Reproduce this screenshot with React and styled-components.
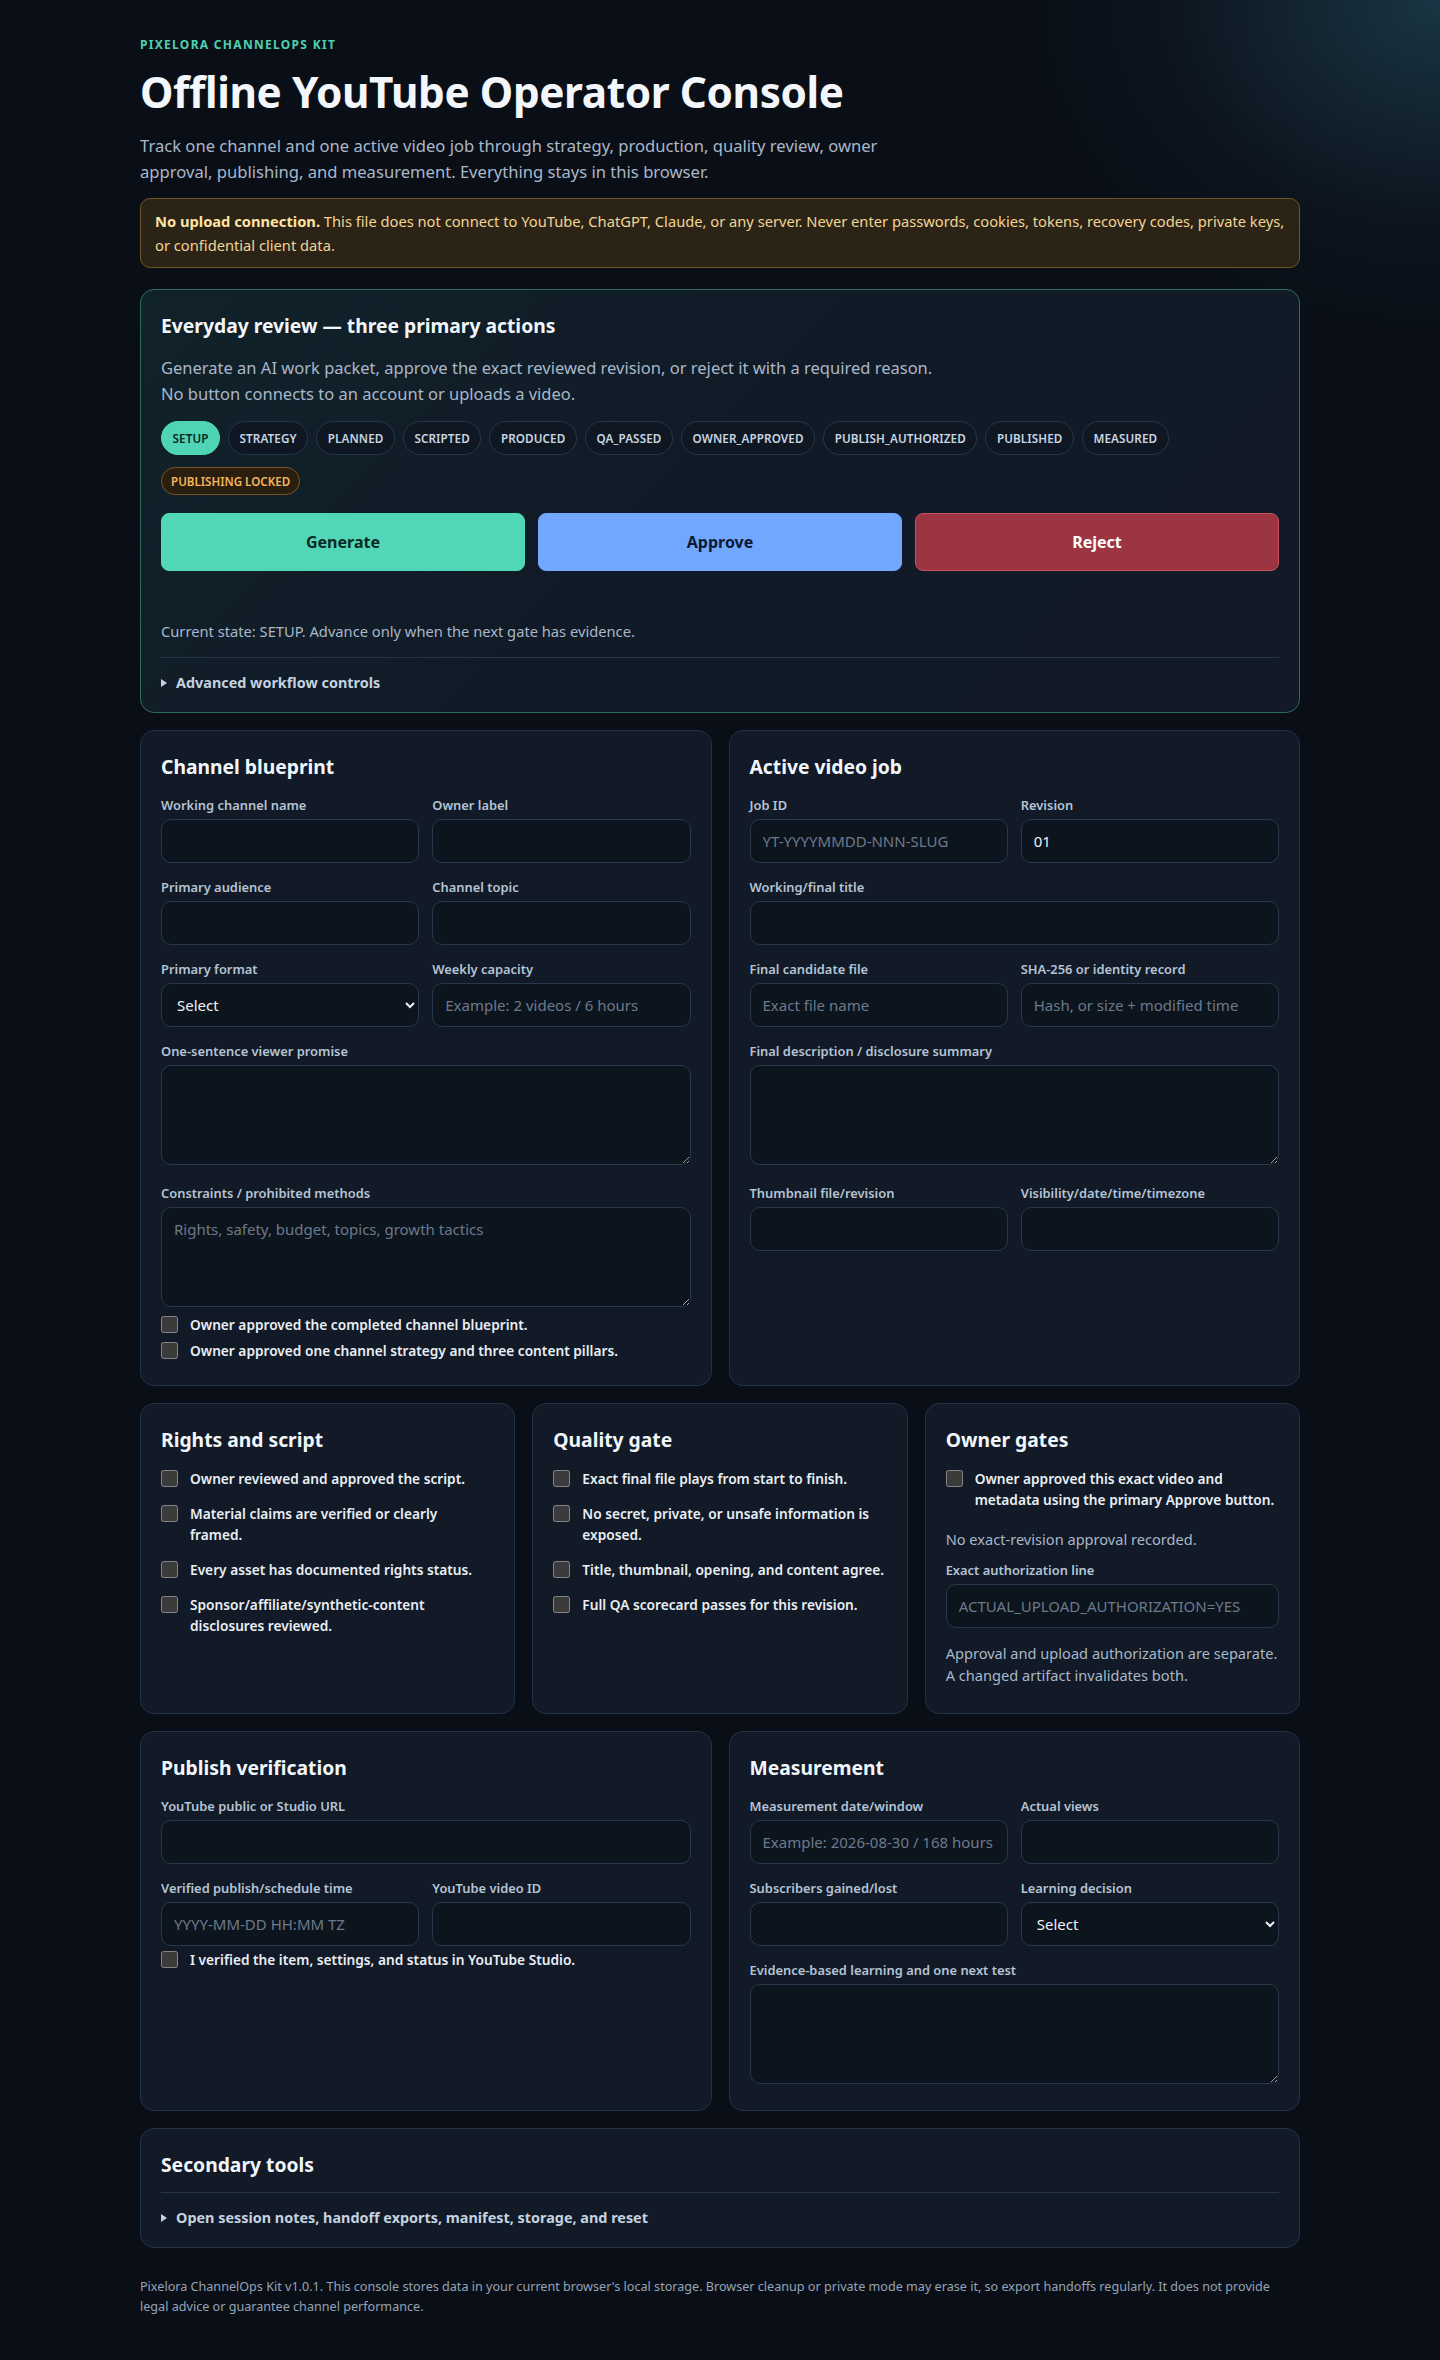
import React from "react";
import styled, { createGlobalStyle, css } from "styled-components";

const GlobalStyle = createGlobalStyle`
  html, body { margin: 0; padding: 0; background: #0a0f17; }
  body {
    min-height: 2360px;
    font-family: "Segoe UI", "Noto Sans", sans-serif;
    color: #e6edf5;
    color-scheme: dark;
    background:
      radial-gradient(ellipse 520px 420px at 100% 0%, rgba(38, 84, 104, 0.55), rgba(20, 40, 56, 0.18) 55%, transparent 80%),
      #0a0f17;
  }
  * { box-sizing: border-box; }
`;

const Page = styled.main`
  max-width: 1160px;
  margin: 0 auto;
  padding: 37px 0 40px;
`;

const Eyebrow = styled.div`
  font-size: 12px;
  line-height: 16px;
  font-weight: 700;
  letter-spacing: 1.3px;
  text-transform: uppercase;
  color: #4fd1b0;
`;

const Title = styled.h1`
  margin: 14px 0 0;
  font-size: 42.3px;
  line-height: 50px;
  font-weight: 700;
  letter-spacing: -0.4px;
  color: #f3f7fc;
`;

const Lead = styled.p`
  margin: 16px 0 0;
  max-width: 800px;
  font-size: 16.6px;
  line-height: 26px;
  color: #a9b7c9;
`;

const Warning = styled.div`
  margin-top: 13px;
  padding: 10px 14px;
  border: 1px solid #6e5423;
  border-radius: 10px;
  background: #2b2416;
  color: #f2d494;
  font-size: 14.7px;
  line-height: 24px;
  strong { color: #ffe3a3; font-weight: 700; }
`;

const Stack = styled.div`
  margin-top: 21px;
  display: flex;
  flex-direction: column;
  gap: 17px;
`;

const Card = styled.section`
  display: flex;
  flex-direction: column;
  padding: 22px 20px ${(p) => p.$pb || "22px"};
  border-radius: 14px;
  border: 1px solid #223247;
  background: #111a26;
  ${(p) =>
    p.$accent &&
    css`
      border-color: #2b6c60;
      background: linear-gradient(135deg, #10222a 0%, #111b27 45%, #111a26 100%);
    `}
`;

const CardTitle = styled.h2`
  margin: 0;
  font-size: 19.3px;
  line-height: 28px;
  font-weight: 700;
  color: #f2f6fb;
`;

const Intro = styled.p`
  margin: 15px 0 0;
  font-size: 16.5px;
  line-height: 26px;
  color: #a9b7c9;
`;

const ChipRow = styled.div`
  margin-top: ${(p) => p.$mt || "14px"};
  display: flex;
  flex-wrap: wrap;
  gap: 8px;
`;

const Chip = styled.span`
  display: inline-flex;
  align-items: center;
  height: 34px;
  padding: 0 10.5px;
  border-radius: 17px;
  border: 1px solid #26364a;
  background: #0f1822;
  color: #c9d5e3;
  font-size: 11.7px;
  font-weight: 600;
  letter-spacing: 0.1px;
  ${(p) =>
    p.$active &&
    css`
      background: #4fd5b6;
      border-color: #4fd5b6;
      color: #06281f;
    `}
`;

const Badge = styled.span`
  display: inline-flex;
  align-items: center;
  height: 28px;
  padding: 0 9px;
  border-radius: 14px;
  border: 1px solid #7a5522;
  background: #2a1e10;
  color: #f4b65b;
  font-size: 11.6px;
  font-weight: 600;
`;

const ActionGrid = styled.div`
  margin-top: 18px;
  display: grid;
  grid-template-columns: repeat(3, 1fr);
  gap: 13px;
`;

const variants = {
  generate: css`background: #52d6b8; border-color: #52d6b8; color: #0a2a22;`,
  approve: css`background: #72a7ff; border-color: #72a7ff; color: #0b1a33;`,
  reject: css`background: #9c3442; border-color: #c8505f; color: #ffffff;`,
};

const ActionButton = styled.button`
  height: 58px;
  border-radius: 8px;
  border: 1px solid transparent;
  font-family: inherit;
  font-size: 16px;
  font-weight: 700;
  cursor: pointer;
  ${(p) => variants[p.$variant]}
`;

const StateLine = styled.p`
  margin: 49px 0 0;
  font-size: 14.7px;
  line-height: 22px;
  color: #a9b7c9;
`;

const Disclosure = styled.details`
  margin-top: ${(p) => p.$mt || "15px"};
  padding-top: 14px;
  border-top: 1px solid #26364a;
`;

const Summary = styled.summary`
  display: flex;
  align-items: center;
  gap: 9px;
  list-style: none;
  font-size: 14.4px;
  line-height: 22px;
  font-weight: 700;
  color: #c5d2e0;
  cursor: pointer;
  &::-webkit-details-marker { display: none; }
  &::before {
    content: "";
    width: 0;
    height: 0;
    border-top: 4px solid transparent;
    border-bottom: 4px solid transparent;
    border-left: 6px solid #c5d2e0;
  }
`;

const Columns = styled.div`
  display: grid;
  grid-template-columns: repeat(${(p) => p.$cols}, 1fr);
  gap: 17px;
`;

const FieldGrid = styled.div`
  margin-top: 15px;
  display: grid;
  grid-template-columns: 1fr 1fr;
  column-gap: 13px;
  row-gap: 15px;
`;

const Field = styled.label`
  display: flex;
  flex-direction: column;
  gap: 5px;
  grid-column: ${(p) => (p.$full ? "1 / -1" : "auto")};
`;

const LabelText = styled.span`
  font-size: 12.9px;
  line-height: 18px;
  font-weight: 600;
  color: #b5c3d5;
`;

const controlBase = css`
  width: 100%;
  border: 1px solid #27384c;
  border-radius: 10px;
  background: #0c141e;
  color: #eef3f8;
  font-family: inherit;
  font-size: 15px;
  padding: 0 12px;
  outline: none;
  &::placeholder { color: #6c7a8b; }
`;

const Input = styled.input`
  ${controlBase}
  height: 44px;
`;

const Select = styled.select`
  ${controlBase}
  height: 44px;
  padding-left: 11px;
`;

const TextArea = styled.textarea`
  ${controlBase}
  height: 100px;
  padding: 10px 12px;
  line-height: 22px;
  margin-bottom: 4px;
  resize: vertical;
`;

const CheckList = styled.div`
  margin-top: ${(p) => p.$mt || "3px"};
  display: flex;
  flex-direction: column;
  gap: ${(p) => p.$gap || "5px"};
`;

const CheckRow = styled.label`
  display: flex;
  align-items: flex-start;
  gap: 12px;
  font-size: 13.7px;
  line-height: 21px;
  font-weight: 600;
  color: #e9eef5;
`;

const Checkbox = styled.input.attrs({ type: "checkbox" })`
  flex: none;
  width: 17px;
  height: 17px;
  margin: 2px 0 0;
`;

const Note = styled.p`
  margin: ${(p) => p.$mt || "16px"} 0 0;
  font-size: 14.6px;
  line-height: 22px;
  color: #a9b7c9;
`;

const SubField = styled(Field)`
  margin-top: 11px;
`;

const Footer = styled.footer`
  margin-top: 29px;
  font-size: 12.6px;
  line-height: 20px;
  color: #95a4b6;
`;

const stages = [
  "SETUP",
  "STRATEGY",
  "PLANNED",
  "SCRIPTED",
  "PRODUCED",
  "QA_PASSED",
  "OWNER_APPROVED",
  "PUBLISH_AUTHORIZED",
  "PUBLISHED",
  "MEASURED",
];

const Check = ({ children }) => (
  <CheckRow>
    <Checkbox />
    <span>{children}</span>
  </CheckRow>
);

const TextField = ({ label, placeholder, value, full }) => (
  <Field $full={full}>
    <LabelText>{label}</LabelText>
    <Input placeholder={placeholder} defaultValue={value} />
  </Field>
);

const SelectField = ({ label }) => (
  <Field>
    <LabelText>{label}</LabelText>
    <Select defaultValue="">
      <option value="">Select</option>
    </Select>
  </Field>
);

const AreaField = ({ label, placeholder }) => (
  <Field $full>
    <LabelText>{label}</LabelText>
    <TextArea placeholder={placeholder} />
  </Field>
);

export default function App() {
  return (
    <>
      <GlobalStyle />
      <Page>
        <Eyebrow>Pixelora ChannelOps Kit</Eyebrow>
        <Title>Offline YouTube Operator Console</Title>
        <Lead>
          Track one channel and one active video job through strategy, production, quality review, owner
          approval, publishing, and measurement. Everything stays in this browser.
        </Lead>
        <Warning>
          <strong>No upload connection.</strong> This file does not connect to YouTube, ChatGPT, Claude, or any
          server. Never enter passwords, cookies, tokens, recovery codes, private keys, or confidential client data.
        </Warning>

        <Stack>
          <Card $accent $pb="18px">
            <CardTitle>Everyday review — three primary actions</CardTitle>
            <Intro>
              Generate an AI work packet, approve the exact reviewed revision, or reject it with a required reason.
              <br />
              No button connects to an account or uploads a video.
            </Intro>
            <ChipRow>
              {stages.map((s, i) => (
                <Chip key={s} $active={i === 0}>
                  {s}
                </Chip>
              ))}
            </ChipRow>
            <ChipRow $mt="12px">
              <Badge>PUBLISHING LOCKED</Badge>
            </ChipRow>
            <ActionGrid>
              <ActionButton $variant="generate">Generate</ActionButton>
              <ActionButton $variant="approve">Approve</ActionButton>
              <ActionButton $variant="reject">Reject</ActionButton>
            </ActionGrid>
            <StateLine>Current state: SETUP. Advance only when the next gate has evidence.</StateLine>
            <Disclosure>
              <Summary>Advanced workflow controls</Summary>
            </Disclosure>
          </Card>

          <Columns $cols={2}>
            <Card $pb="24px">
              <CardTitle>Channel blueprint</CardTitle>
              <FieldGrid>
                <TextField label="Working channel name" />
                <TextField label="Owner label" />
                <TextField label="Primary audience" />
                <TextField label="Channel topic" />
                <SelectField label="Primary format" />
                <TextField label="Weekly capacity" placeholder="Example: 2 videos / 6 hours" />
                <AreaField label="One-sentence viewer promise" />
                <AreaField label="Constraints / prohibited methods" placeholder="Rights, safety, budget, topics, growth tactics" />
              </FieldGrid>
              <CheckList>
                <Check>Owner approved the completed channel blueprint.</Check>
                <Check>Owner approved one channel strategy and three content pillars.</Check>
              </CheckList>
            </Card>
            <Card $pb="24px">
              <CardTitle>Active video job</CardTitle>
              <FieldGrid>
                <TextField label="Job ID" placeholder="YT-YYYYMMDD-NNN-SLUG" />
                <TextField label="Revision" value="01" />
                <TextField label="Working/final title" full />
                <TextField label="Final candidate file" placeholder="Exact file name" />
                <TextField label="SHA-256 or identity record" placeholder="Hash, or size + modified time" />
                <AreaField label="Final description / disclosure summary" />
                <TextField label="Thumbnail file/revision" />
                <TextField label="Visibility/date/time/timezone" />
              </FieldGrid>
            </Card>
          </Columns>

          <Columns $cols={3}>
            <Card $pb="27px">
              <CardTitle>Rights and script</CardTitle>
              <CheckList $mt="14px" $gap="14px">
                <Check>Owner reviewed and approved the script.</Check>
                <Check>
                  Material claims are verified or clearly
                  <br />
                  framed.
                </Check>
                <Check>Every asset has documented rights status.</Check>
                <Check>Sponsor/affiliate/synthetic-content disclosures reviewed.</Check>
              </CheckList>
            </Card>
            <Card $pb="27px">
              <CardTitle>Quality gate</CardTitle>
              <CheckList $mt="14px" $gap="14px">
                <Check>Exact final file plays from start to finish.</Check>
                <Check>No secret, private, or unsafe information is exposed.</Check>
                <Check>Title, thumbnail, opening, and content agree.</Check>
                <Check>Full QA scorecard passes for this revision.</Check>
              </CheckList>
            </Card>
            <Card $pb="27px">
              <CardTitle>Owner gates</CardTitle>
              <CheckList $mt="14px">
                <Check>Owner approved this exact video and metadata using the primary Approve button.</Check>
              </CheckList>
              <Note $mt="18px">No exact-revision approval recorded.</Note>
              <SubField>
                <LabelText>Exact authorization line</LabelText>
                <Input placeholder="ACTUAL_UPLOAD_AUTHORIZATION=YES" />
              </SubField>
              <Note $mt="14px">
                Approval and upload authorization are separate. A changed artifact invalidates both.
              </Note>
            </Card>
          </Columns>

          <Columns $cols={2}>
            <Card>
              <CardTitle>Publish verification</CardTitle>
              <FieldGrid>
                <TextField label="YouTube public or Studio URL" full />
                <TextField label="Verified publish/schedule time" placeholder="YYYY-MM-DD HH:MM TZ" />
                <TextField label="YouTube video ID" />
              </FieldGrid>
              <CheckList>
                <Check>I verified the item, settings, and status in YouTube Studio.</Check>
              </CheckList>
            </Card>
            <Card>
              <CardTitle>Measurement</CardTitle>
              <FieldGrid>
                <TextField label="Measurement date/window" placeholder="Example: 2026-08-30 / 168 hours" />
                <TextField label="Actual views" />
                <TextField label="Subscribers gained/lost" />
                <SelectField label="Learning decision" />
                <AreaField label="Evidence-based learning and one next test" />
              </FieldGrid>
            </Card>
          </Columns>

          <Card $pb="18px">
            <CardTitle>Secondary tools</CardTitle>
            <Disclosure $mt="13px">
              <Summary>Open session notes, handoff exports, manifest, storage, and reset</Summary>
            </Disclosure>
          </Card>
        </Stack>

        <Footer>
          Pixelora ChannelOps Kit v1.0.1. This console stores data in your current browser's local storage. Browser
          cleanup or private mode may erase it, so export handoffs regularly. It does not provide legal advice or
          guarantee channel performance.
        </Footer>
      </Page>
    </>
  );
}
